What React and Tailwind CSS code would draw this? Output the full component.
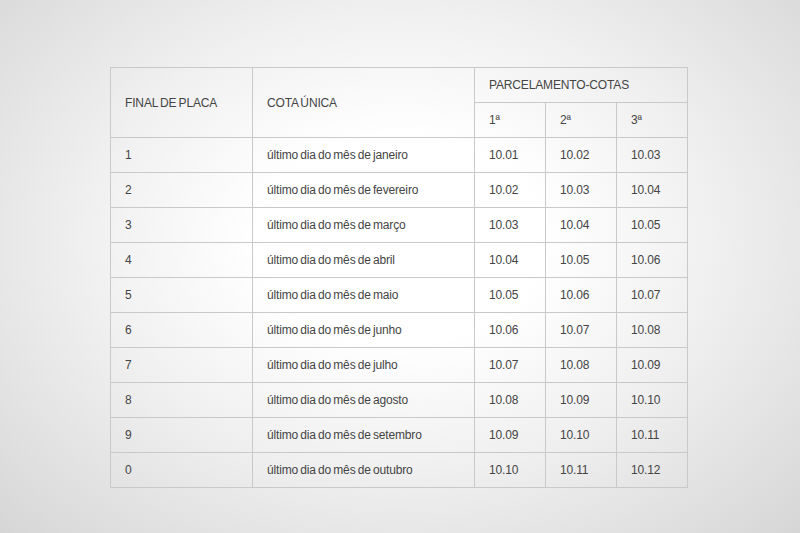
const months = ['janeiro', 'fevereiro', 'março', 'abril', 'maio', 'junho', 'julho', 'agosto', 'setembro', 'outubro'];
const plates = ['1', '2', '3', '4', '5', '6', '7', '8', '9', '0'];

const pad = (n) => String(n).padStart(2, '0');

const rows = plates.map((p, i) => ({
  plate: p,
  month: months[i],
  q: [1, 2, 3].map((k) => `10.${pad(i + k)}`),
}));

export default function App() {
  const cell = 'border border-[#c9c9c9] pl-[14px] text-left font-normal align-middle';
  return (
    <div
      className="w-[800px] h-[533px] flex items-start pl-[110px] pt-[67px] bg-[radial-gradient(ellipse_at_50%_45%,#ffffff_25%,#f0f0f0_55%,#d6d6d6_100%)]"
      style={{ fontFamily: '"Liberation Sans", Arial, sans-serif' }}
    >
      <table className="table-fixed border-collapse w-[577px] h-[421px] text-[12px] text-[#444] tracking-[-0.15px] [word-spacing:-1px]">
        <colgroup>
          <col className="w-[142px]" />
          <col className="w-[222px]" />
          <col className="w-[71px]" />
          <col className="w-[71px]" />
          <col className="w-[71px]" />
        </colgroup>
        <thead>
          <tr className="h-[35px]">
            <th rowSpan={2} className={cell}>FINAL DE PLACA</th>
            <th rowSpan={2} className={cell}>COTA ÚNICA</th>
            <th colSpan={3} className={cell}>PARCELAMENTO-COTAS</th>
          </tr>
          <tr className="h-[35px]">
            <th className={cell}>1ª</th>
            <th className={cell}>2ª</th>
            <th className={cell}>3ª</th>
          </tr>
        </thead>
        <tbody>
          {rows.map((r) => (
            <tr key={r.plate} className="h-[35px]">
              <td className={cell}>{r.plate}</td>
              <td className={cell}>último dia do mês de {r.month}</td>
              {r.q.map((v, j) => (
                <td key={j} className={cell}>{v}</td>
              ))}
            </tr>
          ))}
        </tbody>
      </table>
    </div>
  );
}
